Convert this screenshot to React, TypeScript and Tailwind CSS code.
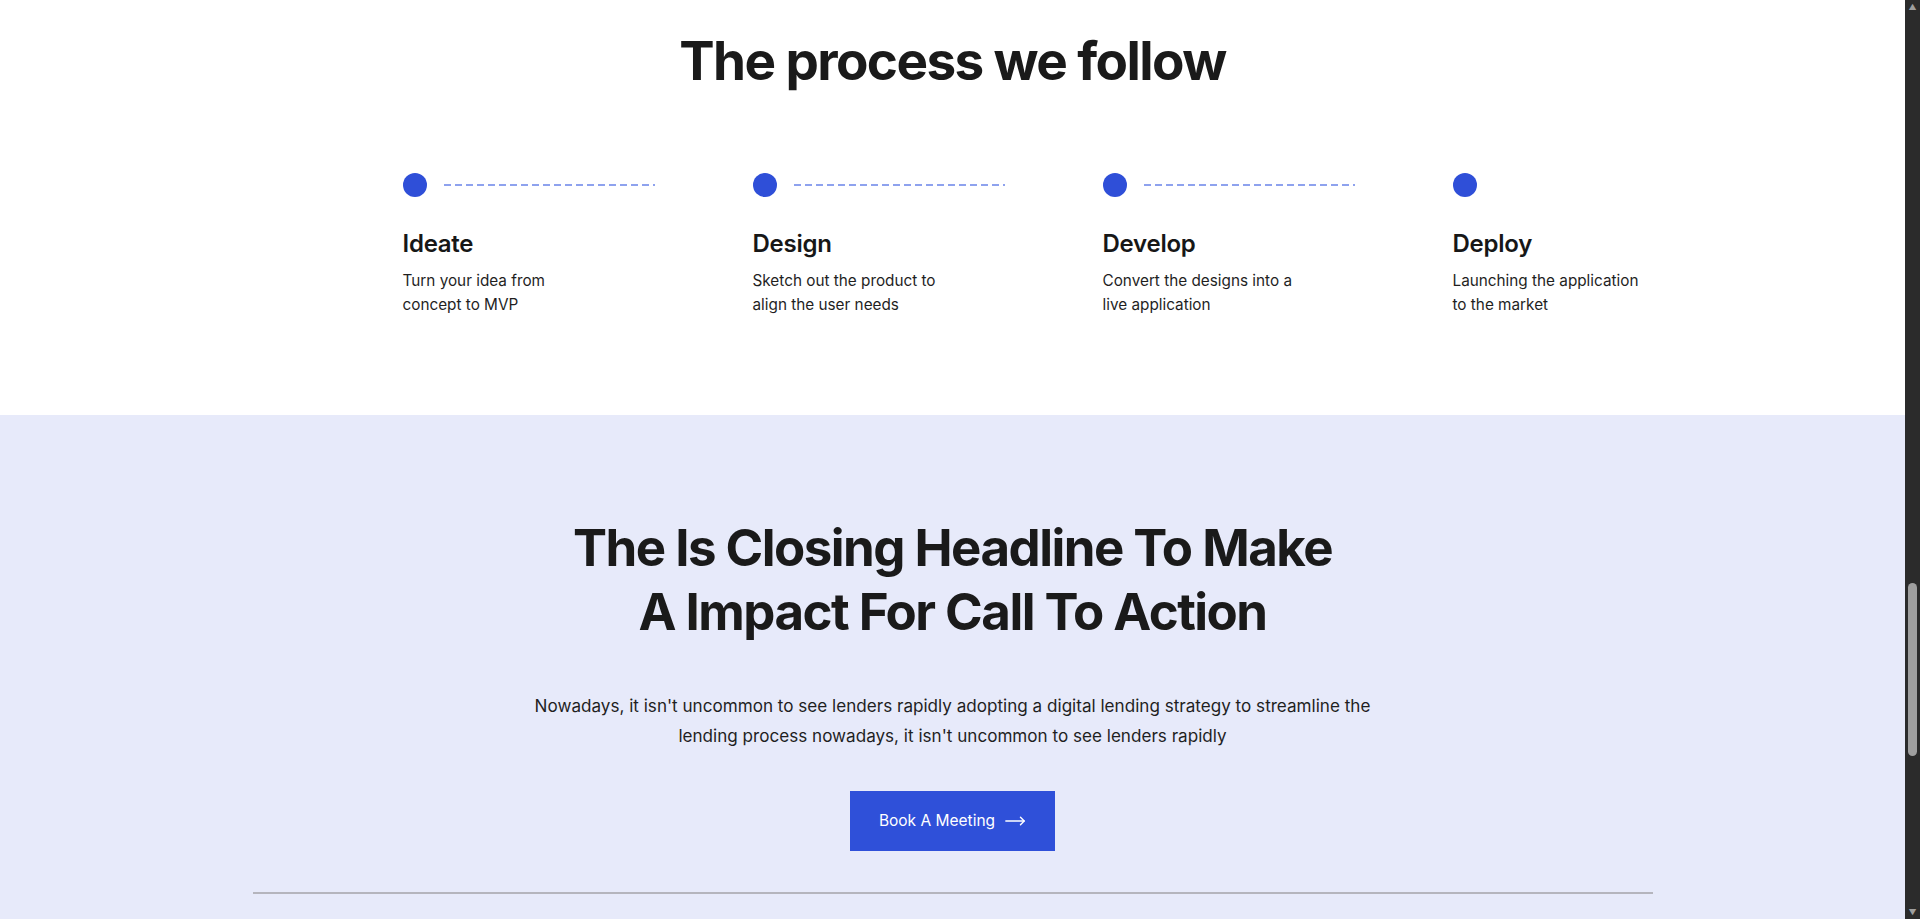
import { MoveRight } from 'lucide-react';

const steps = [
  { title: 'Ideate', text: 'Turn your idea from concept to MVP' },
  { title: 'Design', text: 'Sketch out the product to align the user needs' },
  { title: 'Develop', text: 'Convert the designs into a live application' },
  { title: 'Deploy', text: 'Launching the application to the market' },
];

function Step({ title, text, last }: { title: string; text: string; last: boolean }) {
  return (
    <div className="w-[350px] shrink-0">
      <div className="flex items-center h-6">
        <span className="w-6 h-6 rounded-full bg-[#2f4fd8]" />
        {!last && (
          <svg className="ml-[17px]" width="211" height="2">
            <line x1="0" y1="1" x2="211" y2="1" stroke="#8ea2ee" strokeWidth="2" strokeDasharray="7 4" />
          </svg>
        )}
      </div>
      <h3 className="mt-[31px] text-[24px] leading-8 font-semibold text-[#171717] tracking-[-0.01em]">{title}</h3>
      <p className="mt-[9px] max-w-[195px] text-[15.3px] leading-6 text-[#1f1f1f]">{text}</p>
    </div>
  );
}

export default function App() {
  return (
    <div className="flex h-[919px] overflow-hidden font-['Inter','Liberation_Sans',sans-serif]">
      <main className="flex-1 min-w-0">
        <section className="bg-white h-[415px] pt-[30px]">
          <h2 className="text-center text-[53px] leading-[1.2] font-bold text-[#1a1a1a] tracking-[-0.03em]">
            The process we follow
          </h2>
          <div className="max-w-[1400px] mx-auto px-[150px] mt-[79px] flex">
            {steps.map((s, i) => (
              <Step key={s.title} title={s.title} text={s.text} last={i === steps.length - 1} />
            ))}
          </div>
        </section>

        <section className="bg-[#e7eafa] h-[504px] pt-[101px]">
          <div className="flex flex-col items-center text-center">
            <h2 className="text-[51px] leading-[64px] font-bold text-[#1a1a1a] tracking-[-0.03em]">
              The Is Closing Headline To Make
              <br />
              A Impact For Call To Action
            </h2>
            <p className="mt-[47px] max-w-[870px] text-[17.1px] leading-[30px] text-[#1f1f1f]">
              Nowadays, it isn't uncommon to see lenders rapidly adopting a digital lending strategy to streamline the
              lending process nowadays, it isn't uncommon to see lenders rapidly
            </p>
            <button
              type="button"
              className="mt-[40px] w-[205px] h-[60px] bg-[#2f50d9] text-white text-[15.5px] flex items-center justify-center gap-[9px]"
            >
              <span>Book A Meeting</span>
              <MoveRight size={22} strokeWidth={1.6} />
            </button>
          </div>
          <div className="max-w-[1400px] mx-auto mt-[41px] h-[2px] bg-[#b5b5bd]" />
        </section>
      </main>

      {/* scrollbar strip */}
      <aside className="w-[15px] shrink-0 bg-[#2b2b2b] flex flex-col items-center">
        <span className="mt-[3px] text-[8px] leading-none text-[#9e9e9e]">▲</span>
        <div className="flex-1 w-full px-[3px] pt-[572px] pb-[152px]">
          <div className="h-full rounded-full bg-[#9f9f9f]" />
        </div>
        <span className="mb-[3px] text-[8px] leading-none text-[#9e9e9e]">▼</span>
      </aside>
    </div>
  );
}
